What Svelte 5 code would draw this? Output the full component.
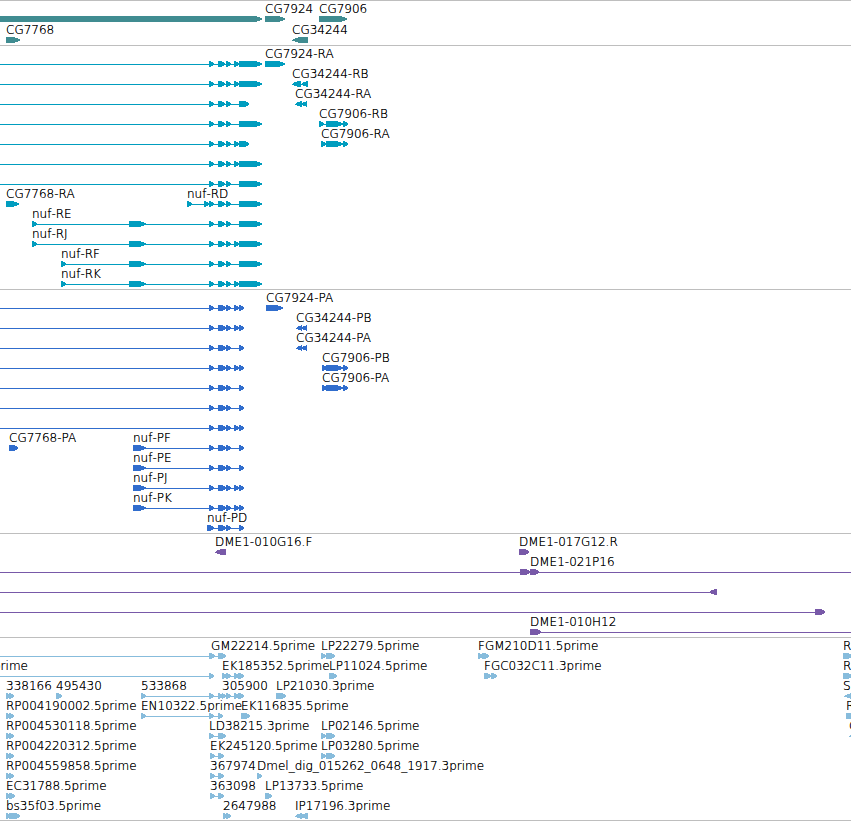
<script>
  // exon ends shared by the nuf isoforms: [start, end]
  const core = [[209, 215], [218, 226], [226, 232]];
  const small = [234, 240];
  const long = [239, 263];
  const short = [239, 250];
  const nuf5 = [129, 147];

  const pCore = [[209, 215], [218, 227], [226, 232]];
  const pSmall = [234, 240];
  const pLast = [239, 245];
  const pFirst = [133, 147];

  const feat = (label, exons, opts = {}) => ({ label, exons, ...opts });
  const rev = { reverse: true };
  const open = { from: 0 };

  const tracks = [
    {
      name: "genes",
      rows: [
        [feat("", [[-20, 263]]), feat("CG7924", [[265, 286]]), feat("CG7906", [[319, 348]])],
        [feat("CG7768", [[6, 21]]), feat("CG34244", [[292, 308]], rev)],
      ],
    },
    {
      name: "transcripts",
      rows: [
        [feat("", [...core, small, long], open), feat("CG7924-RA", [[265, 286]])],
        [feat("", [...core, small, long], open), feat("CG34244-RB", [[292, 301], [301, 308]], rev)],
        [feat("", [...core, short], open), feat("CG34244-RA", [[295, 302], [301, 307]], rev)],
        [feat("", [...core, long], open), feat("CG7906-RB", [[319, 325], [326, 344], [343, 349]])],
        [feat("", [...core, small, short], open), feat("CG7906-RA", [[321, 327], [326, 344], [343, 349]])],
        [feat("", [...core, small, long], open)],
        [feat("", [...core, long], open)],
        [feat("CG7768-RA", [[6, 20]]), feat("nuf-RD", [[187, 193], [204, 210], ...core, long])],
        [feat("nuf-RE", [[32, 38], nuf5, ...core, long])],
        [feat("nuf-RJ", [[32, 38], nuf5, ...core, small, long])],
        [feat("nuf-RF", [[61, 67], nuf5, ...core, long])],
        [feat("nuf-RK", [[61, 67], nuf5, ...core, small, long])],
      ],
    },
    {
      name: "proteins",
      rows: [
        [feat("", [...pCore, pSmall, pLast], open), feat("CG7924-PA", [[266, 284]])],
        [feat("", [...pCore, pSmall, pLast], open), feat("CG34244-PB", [[296, 302], [301, 307]], rev)],
        [feat("", [...pCore, pLast], open), feat("CG34244-PA", [[296, 302], [301, 307]], rev)],
        [feat("", [...pCore, pSmall, pLast], open), feat("CG7906-PB", [[322, 328], [326, 344], [343, 349]])],
        [feat("", [...pCore, pLast], open), feat("CG7906-PA", [[322, 328], [326, 344], [343, 349]])],
        [feat("", [...pCore, pLast], open)],
        [feat("", [...pCore, pSmall, pLast], open)],
        [feat("CG7768-PA", [[9, 19]]), feat("nuf-PF", [pFirst, ...pCore, pLast])],
        [feat("nuf-PE", [pFirst, ...pCore, pLast])],
        [feat("nuf-PJ", [pFirst, ...pCore, pSmall, pLast])],
        [feat("nuf-PK", [pFirst, ...pCore, pSmall, pLast])],
        [feat("nuf-PD", [[207, 215], ...pCore.slice(1), pLast])],
      ],
    },
    {
      name: "clones",
      rows: [
        [feat("DME1-010G16.F", [[215, 226]], rev), feat("DME1-017G12.R", [[519, 530]])],
        [feat("", [[520, 531]], open), feat("DME1-021P16", [[530, 540]], { to: 4000 })],
        [feat("", [[709, 717]], { from: 0, reverse: true })],
        [feat("", [[815, 826]], open)],
        [feat("DME1-010H12", [[530, 542]], { to: 4000 })],
      ],
    },
    {
      name: "ests",
      rows: [
        [
          feat("GM22214.5prime", [[209, 216], [218, 227]], { from: 0, labelAt: 211 }),
          feat("LP22279.5prime", [[321, 327], [326, 336]]),
          feat("FGM210D11.5prime", [[478, 484], [482, 490]]),
          feat("R", [[843, 853]]),
        ],
        [
          feat("prime", [[209, 215]], { from: 0, labelAt: -7 }),
          feat("EK185352.5prime", [[222, 228], [226, 232], [234, 240], [238, 245]]),
          feat("LP11024.5prime", [[329, 338]]),
          feat("FGC032C11.3prime", [[484, 492], [491, 498]]),
          feat("R", [[843, 853]]),
        ],
        [
          feat("338166", [[6, 12], [9, 15]]),
          feat("495430", [[56, 63]]),
          feat("533868", [[141, 147], [209, 215], [218, 224]]),
          feat("305900", [[222, 227], [226, 232], [234, 240], [238, 245]]),
          feat("LP21030.3prime", [[276, 287]]),
          feat("S", [[844, 860]], { reverse: true, labelAt: 843 }),
        ],
        [
          feat("RP004190002.5prime", [[6, 12], [9, 15]]),
          feat("EN10322.5prime", [[141, 147], [209, 215], [218, 224]]),
          feat("EK116835.5prime", [[241, 251]]),
          feat("R", [[846, 870]]),
        ],
        [
          feat("RP004530118.5prime", [[6, 12], [9, 15]]),
          feat("LD38215.3prime", [[209, 215], [218, 227]]),
          feat("LP02146.5prime", [[321, 327], [326, 336]]),
          feat("G", [[849, 865]], rev),
        ],
        [
          feat("RP004220312.5prime", [[6, 12], [9, 15]]),
          feat("EK245120.5prime", [[210, 216], [218, 225]]),
          feat("LP03280.5prime", [[321, 327], [326, 336]]),
        ],
        [
          feat("RP004559858.5prime", [[6, 12], [9, 15]]),
          feat("367974", [[210, 216], [218, 225]]),
          feat("Dmel_dig_015262_0648_1917.3prime", [[257, 263]]),
        ],
        [
          feat("EC31788.5prime", [[6, 12], [9, 16]]),
          feat("363098", [[210, 216], [218, 225]]),
          feat("LP13733.5prime", [[265, 273]]),
        ],
        [
          feat("bs35f03.5prime", [[6, 12], [9, 21]]),
          feat("2647988", [[223, 229], [226, 232]]),
          feat("IP17196.3prime", [[295, 302], [300, 308]], rev),
        ],
      ],
    },
  ];

  // a bar whose last few pixels step down to a point
  function arrow([start, end], reverse) {
    const width = end - start;
    const head = Math.min(width > 12 ? 8 : 6, width);
    const tip = reverse ? start : end;
    const tail = reverse ? end : start;
    const dir = reverse ? -1 : 1;
    const neck = tip - dir * head;
    const mid = tip - dir * Math.ceil(head / 2);
    return `${tail},0 ${neck},0 ${mid},1 ${tip},3 ${mid},5 ${neck},6 ${tail},6`;
  }

  function line(f) {
    const start = f.from ?? f.exons[0][0];
    const end = f.to ?? f.exons[f.exons.length - 1][1] - 2;
    return `M${start} 3h${end - start}v1H${start}z`;
  }
</script>

<main class="browser">
  {#each tracks as track}
    <section class="track {track.name}" aria-label={track.name}>
      {#each track.rows as row}
        <div class="row">
          {#each row as f}
            {#if f.label}
              <span class="label" style={`left: ${f.labelAt ?? f.exons[0][0]}px;`}>{f.label}</span>
            {/if}
          {/each}
          <svg class="glyphs" aria-hidden="true">
            {#each row as f}
              <path d={line(f)} />
              {#each f.exons as exon}
                <polygon points={arrow(exon, f.reverse)} />
              {/each}
            {/each}
          </svg>
        </div>
      {/each}
    </section>
  {/each}
</main>

<style>
  :global(body) {
    margin: 0;
    background: #fff;
  }

  .browser {
    overflow: hidden;
    border-bottom: 1px solid #bebebe;
    font-family: "DejaVu Sans", sans-serif;
    font-size: 12px;
    font-weight: 200;
    line-height: 14px;
    color: #000;
  }

  .track {
    padding: 1px 0 2px;
    border-top: 1px solid #bebebe;
  }

  .row {
    position: relative;
    display: flex;
    align-items: flex-end;
    height: 20px;
  }

  /* labels sit at their feature's coordinate and may run over a neighbour */
  .label {
    position: absolute;
    top: 0;
    white-space: nowrap;
    /* thin strokes need the extra ink at this size */
    text-shadow: 0 0 0 #000;
  }

  .glyphs {
    display: block;
    width: 100%;
    height: 6px;
    fill: currentColor;
    shape-rendering: crispEdges;
  }

  .genes {
    padding-top: 0;
  }

  .genes .row {
    height: 21px;
  }

  .genes .label {
    top: 1px;
  }

  .genes .glyphs {
    color: #408c91;
  }

  .transcripts .glyphs {
    color: #009dbf;
  }

  .proteins .glyphs {
    color: #306dcd;
  }

  .clones .glyphs {
    color: #7859a8;
  }

  .ests {
    padding-bottom: 1px;
  }

  .ests .glyphs {
    color: #87bcdc;
  }
</style>
